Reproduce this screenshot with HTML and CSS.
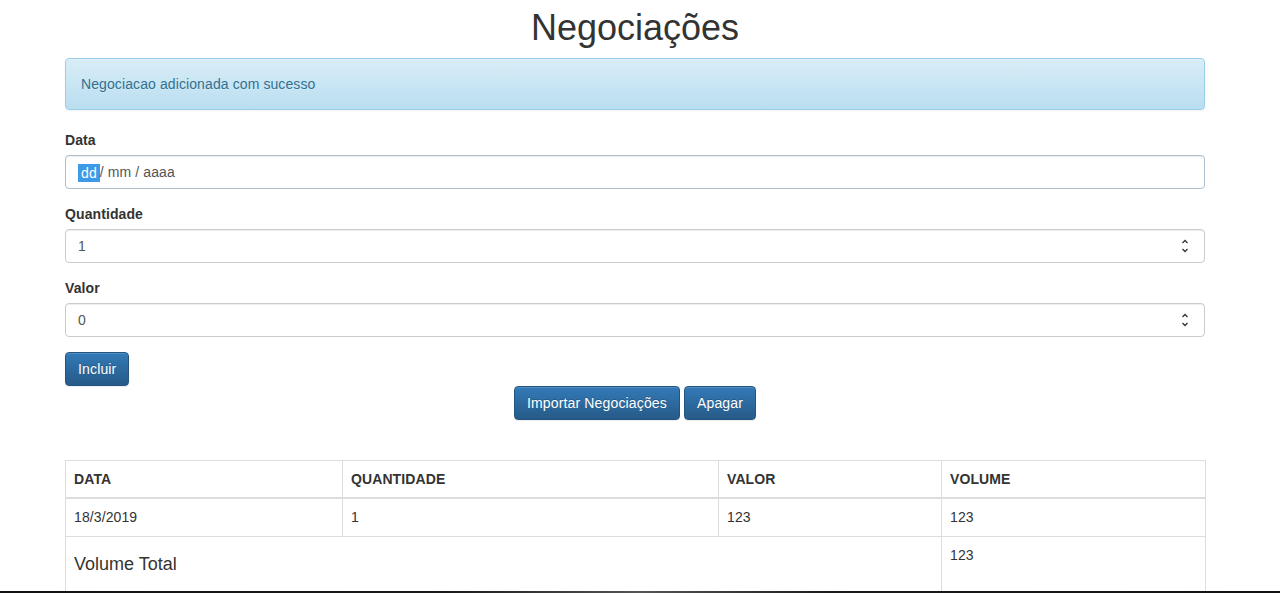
FILE: index.html
```html
<!DOCTYPE html>
<html lang="pt">
<head>
<meta charset="utf-8">
<title>Negociações</title>
<link rel="stylesheet" href="styles.css">
</head>
<body>
<div class="container">
  <h1 class="title">Negociações</h1>
  <div class="alert">Negociacao adicionada com sucesso</div>
  <form class="form">
    <div class="form-group">
      <label class="label">Data</label>
      <div class="input input-focus"><span class="sel">dd</span><span class="rest">/ mm / aaaa</span></div>
    </div>
    <div class="form-group">
      <label class="label">Quantidade</label>
      <div class="input"><span>1</span>
        <svg class="spin" width="10" height="16" viewBox="0 0 10 16"><path d="M2.5 5 L5 2.5 L7.5 5" fill="none" stroke="#333" stroke-width="1.3"/><path d="M2.5 11 L5 13.5 L7.5 11" fill="none" stroke="#333" stroke-width="1.3"/></svg>
      </div>
    </div>
    <div class="form-group">
      <label class="label">Valor</label>
      <div class="input"><span>0</span>
        <svg class="spin" width="10" height="16" viewBox="0 0 10 16"><path d="M2.5 5 L5 2.5 L7.5 5" fill="none" stroke="#333" stroke-width="1.3"/><path d="M2.5 11 L5 13.5 L7.5 11" fill="none" stroke="#333" stroke-width="1.3"/></svg>
      </div>
    </div>
    <button type="button" class="btn">Incluir</button>
  </form>
  <div class="actions">
    <button type="button" class="btn">Importar Negociações</button>
    <button type="button" class="btn">Apagar</button>
  </div>
  <table class="table">
    <colgroup>
      <col class="c1"><col class="c2"><col class="c3"><col class="c4">
    </colgroup>
    <thead>
      <tr><th>DATA</th><th>QUANTIDADE</th><th>VALOR</th><th>VOLUME</th></tr>
    </thead>
    <tbody>
      <tr><td>18/3/2019</td><td>1</td><td>123</td><td>123</td></tr>
    </tbody>
    <tfoot>
      <tr><td colspan="3"><h4 class="total">Volume Total</h4></td><td>123</td></tr>
    </tfoot>
  </table>
</div>
<div class="edge"></div>
</body>
</html>
```

FILE: styles.css
```css
* { box-sizing: border-box; }
html, body { margin: 0; padding: 0; }
body {
  font-family: "Liberation Sans", Arial, Helvetica, sans-serif;
  font-size: 14px;
  line-height: 1.42857;
  letter-spacing: 0.1px;
  color: #333;
  background: #fff;
  overflow: hidden;
  padding-right: 10px;
}
.container {
  width: 1170px;
  margin: 0 auto;
  padding: 0 15px;
}
.title {
  font-size: 36px;
  font-weight: 500;
  line-height: 1.1;
  letter-spacing: 0;
  margin: 8px 0 10px;
  text-align: center;
  color: #333;
}
.alert {
  padding: 16px 15px 14px;
  margin-bottom: 20px;
  border: 1px solid #9acfea;
  border-radius: 4px;
  color: #31708f;
  background-image: linear-gradient(to bottom, #d9edf7 0, #b9def0 100%);
  box-shadow: inset 0 1px 0 rgba(255,255,255,.25), 0 1px 2px rgba(0,0,0,.05);
  text-shadow: 0 1px 0 rgba(255,255,255,.2);
}
.form-group { margin-bottom: 15px; }
.label {
  display: inline-block;
  font-weight: bold;
  margin-bottom: 5px;
  padding-top: 1px;
  line-height: 19px;
}
.input {
  display: flex;
  align-items: center;
  justify-content: space-between;
  height: 34px;
  padding: 7px 12px 5px;
  border: 1px solid #ccc;
  border-radius: 4px;
  color: #555;
  box-shadow: inset 0 1px 1px rgba(0,0,0,.075);
}
.input-focus {
  justify-content: flex-start;
  border-color: #adbfd1;
}
.sel {
  background: #3c9ae8;
  color: #fff;
  padding: 0 3px;
  line-height: 18px;
}
.rest { margin-left: 0; }
.spin { margin-right: 2px; margin-top: -2px; }
.btn {
  display: inline-block;
  padding: 7px 12px 5px;
  font-family: inherit;
  font-size: 14px;
  line-height: 1.42857;
  letter-spacing: 0.15px;
  color: #fff;
  border: 1px solid #245580;
  border-radius: 4px;
  background-image: linear-gradient(to bottom, #337ab7 0, #265a88 100%);
  text-shadow: 0 -1px 0 rgba(0,0,0,.2);
  box-shadow: inset 0 1px 0 rgba(255,255,255,.15), 0 1px 1px rgba(0,0,0,.075);
  cursor: pointer;
  margin: 0;
}
.actions {
  text-align: center;
  padding-bottom: 40px;
}
.table {
  width: 100%;
  table-layout: fixed;
  border-collapse: collapse;
  border: 1px solid #ddd;
  margin-bottom: 20px;
}
.c1 { width: 277px; }
.c2 { width: 376px; }
.c3 { width: 223px; }
.c4 { width: 264px; }
.table th, .table td {
  padding: 9px 8px 8px;
  line-height: 1.42857;
  border: 1px solid #ddd;
  text-align: left;
  vertical-align: top;
}
.table thead th {
  padding-bottom: 7px;
  border-bottom: 2px solid #ddd;
  vertical-align: bottom;
  font-weight: bold;
}
.total {
  font-size: 18px;
  font-weight: 500;
  line-height: 1.1;
  letter-spacing: 0;
  margin: 9px 0 10px;
}
.edge {
  position: fixed;
  left: 0;
  right: 0;
  bottom: 0;
  height: 2px;
  background: linear-gradient(to right, #111 0, #1a1a1a 35%, #555 50%, #1a1a1a 65%, #111 100%);
}
```
